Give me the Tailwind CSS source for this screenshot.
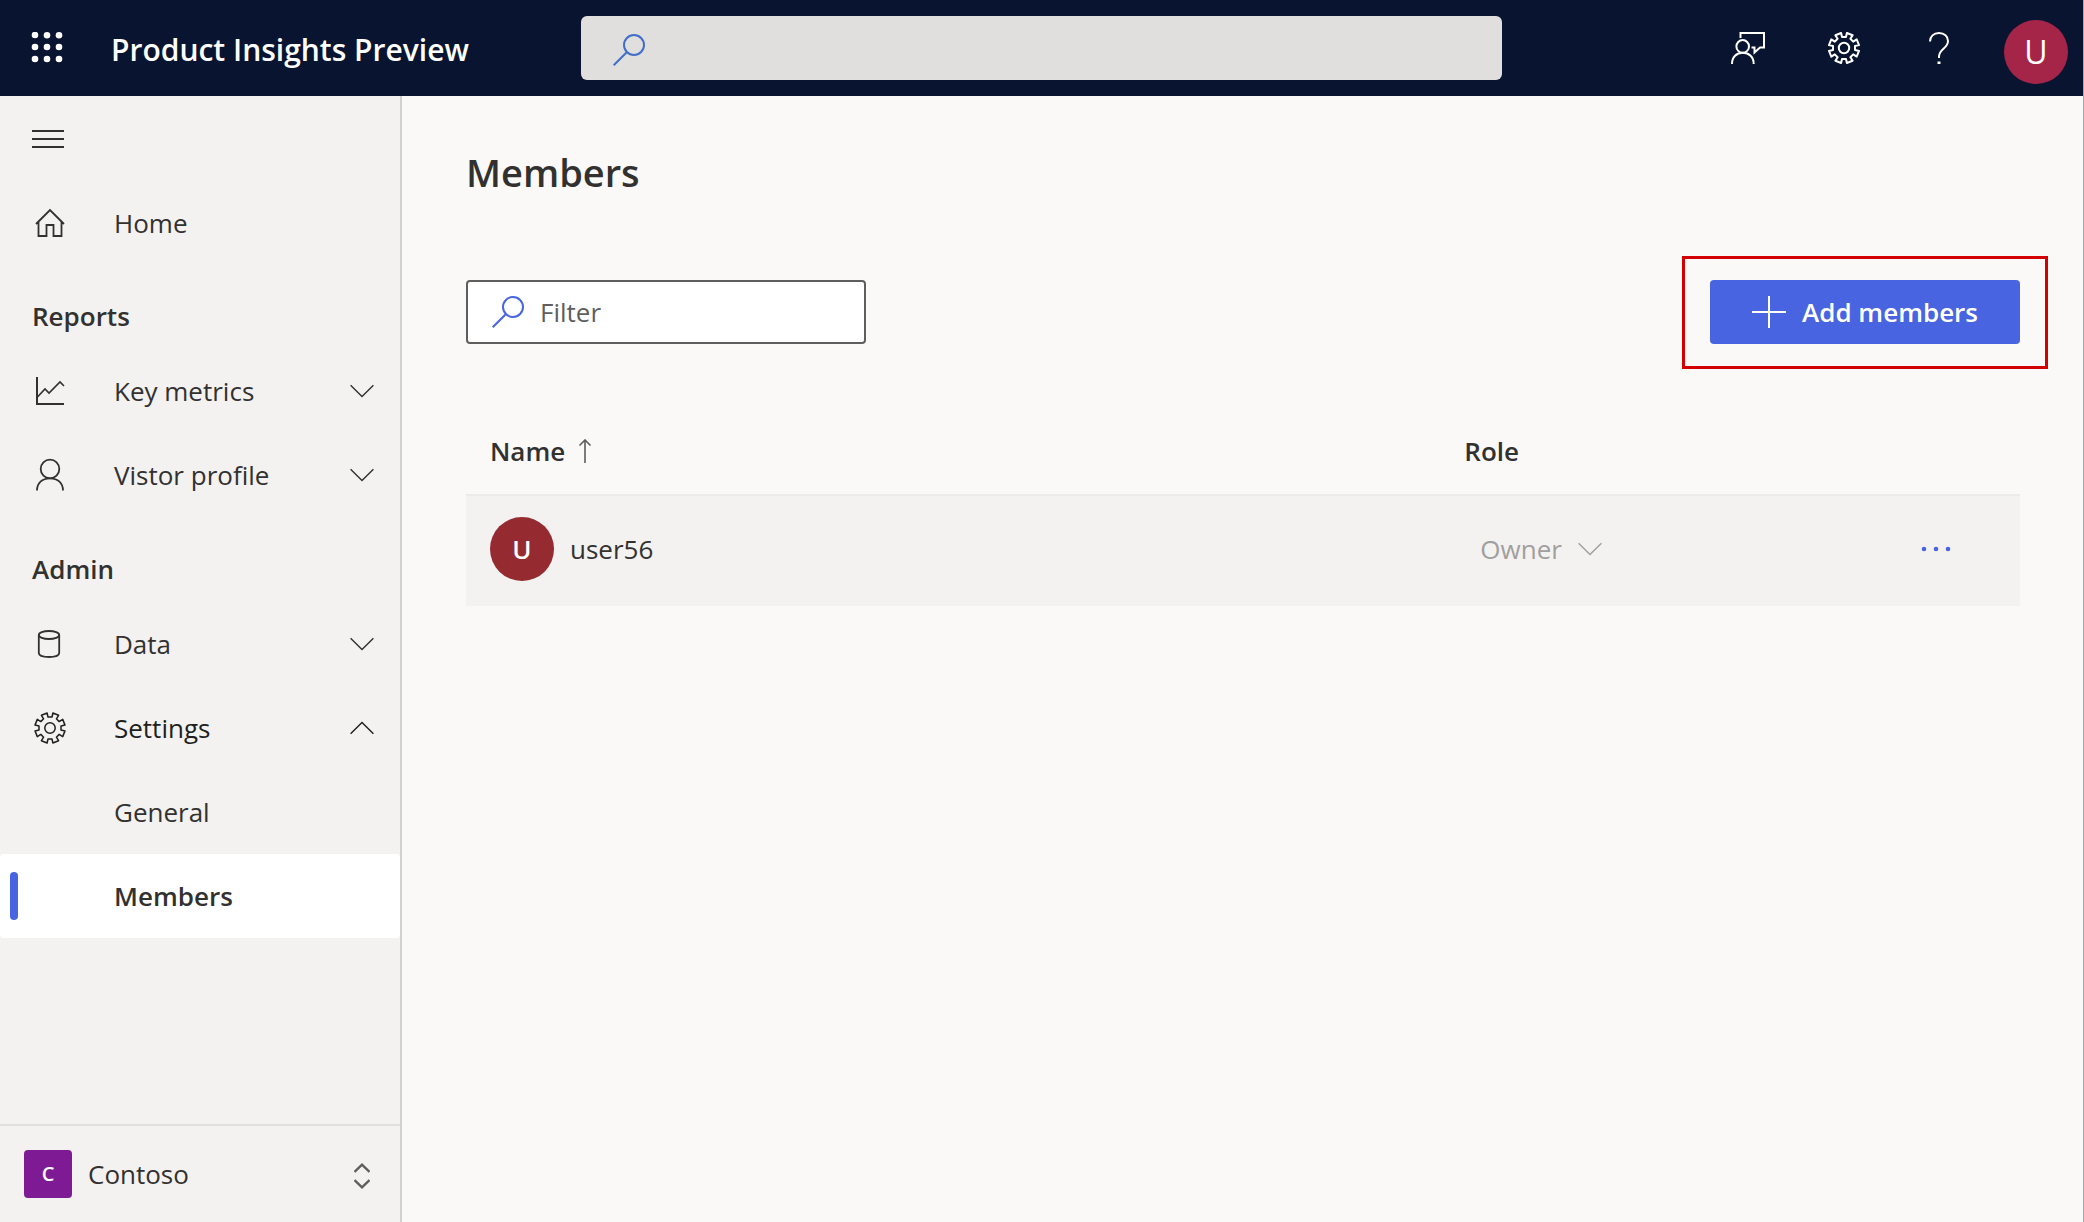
<!DOCTYPE html>
<html lang="en">
<head>
<meta charset="utf-8">
<meta name="viewport" content="width=device-width, initial-scale=1">
<title>Members - Product Insights Preview</title>
<script src="https://cdn.jsdelivr.net/npm/@tailwindcss/browser@4"></script>
</head>
<body class="flex min-h-screen flex-col border-r border-[#a6a6a6] bg-[#faf9f8] font-['Open_Sans','Noto_Sans',sans-serif] text-[26px] leading-9 text-[#323130]">

<svg class="hidden" aria-hidden="true">
  <symbol id="gear" viewBox="-16 -16 32 32">
    <path fill="none" stroke="currentColor" stroke-linejoin="round" d="M2-11 2.9-15 8.6-12.7 6.4-9.2 9.2-6.4 12.7-8.6 15-2.9 11-2V2L15 2.9 12.7 8.6 9.2 6.4 6.4 9.2 8.6 12.7 2.9 15 2 11H-2L-2.9 15-8.6 12.7-6.4 9.2-9.2 6.4-12.7 8.6-15 2.9-11 2V-2L-15-2.9-12.7-8.6-9.2-6.4-6.4-9.2-8.6-12.7-2.9-15-2-11Z"/>
    <circle fill="none" stroke="currentColor" r="5.2"/>
  </symbol>
  <symbol id="chevron" viewBox="0 0 24 14">
    <path fill="none" stroke="currentColor" stroke-width="1.4" d="M.6 1.2 12 12.6 23.4 1.2"/>
  </symbol>
  <symbol id="search" viewBox="0 0 32 32">
    <g fill="none" stroke="currentColor" stroke-width="2"><circle cx="21" cy="11" r="10"/><path d="M14 18 .7 31.3"/></g>
  </symbol>
</svg>

<header class="flex h-24 items-center justify-between bg-[#091430] text-white">
  <div class="flex flex-1 items-center">
    <button class="mr-12 ml-[31px]" aria-label="App launcher">
      <svg class="size-8" viewBox="0 0 32 32" fill="currentColor"><circle cx="4" cy="3" r="3.3"/><circle cx="16" cy="3.300" r="3.3"/><circle cx="28" cy="3.300" r="3.3"/><circle cx="4" cy="15" r="3.3"/><circle cx="16" cy="15" r="3.3"/><circle cx="28" cy="15" r="3.3"/><circle cx="4" cy="27" r="3.3"/><circle cx="16" cy="27" r="3.3"/><circle cx="28" cy="27" r="3.3"/></svg>
    </button>
    <span class="pt-1 text-[30px] font-semibold whitespace-nowrap">Product Insights Preview</span>
  </div>
  <label class="flex h-16 w-[44.2%] items-center rounded-md bg-[#e1dfdd] px-8 text-[#323130]">
    <svg class="mt-1 size-8 shrink-0 text-[#3f6fc9]"><use href="#search"/></svg>
    <input type="search" aria-label="Search" class="ml-4 min-w-0 flex-1 bg-transparent outline-none">
  </label>
  <div class="flex flex-1 items-center justify-end">
    <button class="mr-[63px]" aria-label="Feedback">
      <svg class="h-8 w-[34px]" viewBox="0 0 34 32" fill="none" stroke="currentColor" stroke-width="2"><path d="M9.5 6V1H33V15.5H29L23.5 20.5V15.5H20.5"/><circle cx="11.7" cy="14.4" r="6.3"/><path d="M1 32C1 25 5.5 20.8 11.8 20.8S22.7 25 22.7 32"/></svg>
    </button>
    <button class="mr-[69px]" aria-label="Settings"><svg class="size-8 stroke-2"><use href="#gear"/></svg></button>
    <button class="mr-[55px]" aria-label="Help">
      <svg class="h-8 w-5" viewBox="0 0 20 32" fill="none" stroke="currentColor" stroke-width="2"><path d="M1 9.5C1 4.5 4.6 1 10 1S19 4.5 19 9C19 16.5 10 17 10 24.500V26"/><path d="M10 29.500V32" stroke-width="3"/></svg>
    </button>
    <button class="mt-2 mr-[15px] flex size-16 items-center justify-center rounded-full bg-[#a52548] text-[32px]" aria-label="Account">U</button>
  </div>
</header>

<div class="flex flex-1">
  <nav class="flex w-[402px] shrink-0 flex-col border-r-2 border-[#d2d0ce] bg-[#f3f2f1]" aria-label="Main">
    <button class="flex h-[85px] items-center px-8" aria-label="Collapse navigation">
      <svg class="h-5 w-8" viewBox="0 0 32 20" stroke="currentColor" stroke-width="2"><path d="M0 2H32M0 10H32M0 18H32"/></svg>
    </button>
    <a href="#" class="flex h-[84px] items-center px-8">
      <svg class="mr-[46px] size-9" viewBox="0 0 36 36" fill="none" stroke="currentColor" stroke-width="1.8"><path d="M4 19 18 5 32 19M6.500 17V31H14.500V20H21.500V31H29.500V17"/></svg>
      Home
    </a>
    <h2 class="flex h-[84px] items-center px-8 pt-[18px] font-semibold">Reports</h2>
    <button class="flex h-[84px] items-center pr-[26px] pl-8">
      <svg class="mr-[46px] size-9" viewBox="0 0 36 36" fill="none" stroke="currentColor"><path stroke-width="2" d="M5 4V31H32"/><path stroke-width="1.600" d="M5 24.500 13 16 17 20 28 9 32 13"/></svg>
      Key metrics
      <svg class="ml-auto h-[14px] w-6"><use href="#chevron"/></svg>
    </button>
    <button class="flex h-[84px] items-center pr-[26px] pl-8">
      <svg class="mr-[46px] size-9" viewBox="0 0 36 36" fill="none" stroke="currentColor" stroke-width="1.800"><circle cx="18" cy="12" r="9.300"/><path d="M5 33.500C5 26 10 21.300 18 21.300S31 26 31 33.500"/></svg>
      Vistor profile
      <svg class="ml-auto h-[14px] w-6"><use href="#chevron"/></svg>
    </button>
    <h2 class="flex h-[85px] items-center px-8 pt-[18px] font-semibold">Admin</h2>
    <button class="flex h-[84px] items-center pr-[26px] pl-8">
      <svg class="mr-[46px] size-9" viewBox="0 0 36 36" fill="none" stroke="currentColor" stroke-width="1.800"><ellipse cx="17" cy="9" rx="10.200" ry="4"/><path d="M6.800 9V27C6.800 32.300 27.200 32.300 27.200 27V9"/></svg>
      Data
      <svg class="ml-auto h-[14px] w-6"><use href="#chevron"/></svg>
    </button>
    <button class="flex h-[84px] items-center pr-[26px] pl-8 text-[#201f1e]" aria-expanded="true">
      <svg class="mx-[2px] size-8 stroke-[1.5px]"><use href="#gear"/></svg>
      <span class="ml-[46px]">Settings</span>
      <svg class="ml-auto h-[14px] w-6 rotate-180"><use href="#chevron"/></svg>
    </button>
    <a href="#" class="flex h-[84px] items-center pl-[114px]">General</a>
    <a href="#" class="flex h-[84px] items-center rounded-sm bg-white pl-[10px] font-semibold" aria-current="page">
      <span class="mr-24 h-12 w-2 rounded-full bg-[#4864e0]"></span>Members
    </a>
    <button class="mt-auto flex h-[98px] items-center border-t-2 border-[#e1dfdd] pr-[30px] pl-6">
      <span class="mr-4 flex size-12 items-center justify-center rounded-sm bg-[#7e1a94] text-[20px] font-semibold text-white">C</span>
      Contoso
      <svg class="mt-1 ml-auto h-[26px] w-4" viewBox="0 0 16 26" fill="none" stroke="#605e5c" stroke-width="2.400"><path d="M.5 9 8 1.700 15.500 9M.5 17 8 24.300 15.500 17"/></svg>
    </button>
  </nav>

  <main class="min-w-0 flex-1 pt-[50px] pr-[63px] pl-16">
    <h1 class="text-[38px] leading-[52px] font-semibold">Members</h1>
    <div class="mt-[82px] flex items-center justify-between">
      <label class="flex h-16 w-[400px] items-center rounded border-2 border-[#605e5c] bg-white px-6">
        <svg class="size-8 shrink-0 text-[#4864e0]"><use href="#search"/></svg>
        <input type="text" placeholder="Filter" aria-label="Filter" class="ml-4 min-w-0 flex-1 bg-transparent outline-none placeholder:text-[#605e5c]">
      </label>
      <div class="relative">
        <button class="flex h-16 items-center rounded bg-[#4864e0] px-[42px] font-semibold text-white">
          <svg class="mr-4 size-[34px]" viewBox="0 0 34 34" stroke="currentColor" stroke-width="2"><path d="M0 17H34M17 1V33"/></svg>
          Add members
        </button>
        <div class="pointer-events-none absolute -inset-x-7 -top-6 -bottom-[25px] border-[3px] border-[#d20000]"></div>
      </div>
    </div>

    <table class="mt-[63px] w-full table-fixed text-left">
      <thead>
        <tr class="h-[88px]">
          <th class="w-[62.7%] pl-6 font-semibold">
            <span class="flex items-center">Name
              <svg class="ml-3 h-6 w-4" viewBox="0 0 16 24" fill="none" stroke="#605e5c" stroke-width="1.600"><path d="M8 24V1M2.500 6.500 8 1 13.500 6.500"/></svg>
            </span>
          </th>
          <th class="pl-6 font-semibold">Role</th>
          <th class="w-[168px]" aria-label="Actions"></th>
        </tr>
      </thead>
      <tbody>
        <tr class="h-[111px] border-t-2 border-[#edebe9] bg-[#f3f2f1]">
          <td class="pb-1 pl-6">
            <div class="flex items-center">
              <span class="mr-4 flex size-16 items-center justify-center rounded-full bg-[#952b30] font-semibold text-white">U</span>user56
            </div>
          </td>
          <td class="pb-1 pl-10">
            <div class="flex items-center text-[#a19f9d]">
              <select disabled aria-label="Role of user56" class="appearance-none bg-transparent opacity-100"><option>Owner</option></select>
              <svg class="ml-4 h-[14px] w-6"><use href="#chevron"/></svg>
            </div>
          </td>
          <td class="pb-1">
            <button class="mx-auto flex h-9 items-center text-[#4864e0]" aria-label="More actions for user56">
              <svg class="h-6 w-8" viewBox="0 0 32 24" fill="currentColor"><circle cx="4" cy="12" r="2.300"/><circle cx="16" cy="12" r="2.300"/><circle cx="28" cy="12" r="2.300"/></svg>
            </button>
          </td>
        </tr>
      </tbody>
    </table>
  </main>
</div>
</body>
</html>
